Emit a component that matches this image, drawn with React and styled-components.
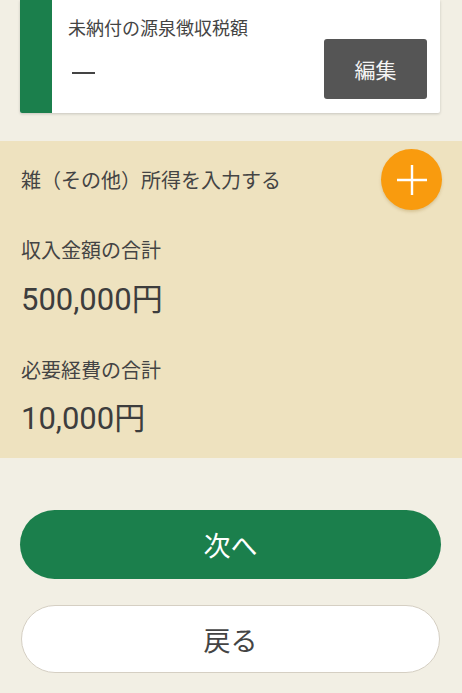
import React from "react";
import styled, { createGlobalStyle } from "styled-components";

const GlobalStyle = createGlobalStyle`
  body {
    margin: 0;
    background: #f2efe4;
    font-family: "Noto Sans CJK JP", "Noto Sans", sans-serif;
    color: #444;
  }
`;

const Page = styled.div`
  width: 462px;
  height: 693px;
  overflow: hidden;
  display: flex;
  flex-direction: column;
`;

const Card = styled.div`
  margin: 0 22px 0 20px;
  height: 113px;
  display: flex;
  background: #fff;
  border-radius: 0 0 2px 2px;
  box-shadow: 0 1px 3px rgba(0, 0, 0, 0.18);
`;

const Bar = styled.div`
  width: 32px;
  background: #1b7f4c;
  border-radius: 0 0 0 2px;
`;

const CardBody = styled.div`
  flex: 1;
  padding: 14px 13px 0 16px;
  display: flex;
  flex-direction: column;
`;

const Label = styled.div`
  font-size: ${(p) => p.size || 18}px;
  line-height: ${(p) => p.lh || 27}px;
  color: #444;
`;

const CardRow = styled.div`
  display: flex;
  justify-content: space-between;
  align-items: center;
  margin-top: -2px;
`;

const Dash = styled.div`
  width: 23px;
  height: 2.5px;
  background: #444;
  margin-left: 4px;
  margin-top: 8px;
`;

const EditButton = styled.button`
  width: 103px;
  height: 60px;
  border: none;
  border-radius: 3px;
  background: #555;
  color: #f4f4f4;
  font-family: inherit;
  font-size: 21px;
`;

const Section = styled.div`
  margin-top: 28px;
  background: #eee2bf;
  padding: 8px 21px 19px 21px;
`;

const SectionHead = styled.div`
  display: flex;
  justify-content: space-between;
  align-items: center;
  margin-right: -1px;
`;

const Title = styled.div`
  font-size: 20px;
  color: #444;
`;

const AddButton = styled.div`
  width: 61px;
  height: 61px;
  border-radius: 50%;
  background: #f99b0e;
  box-shadow: 0 2px 3px rgba(150, 110, 30, 0.25);
  display: flex;
  align-items: center;
  justify-content: center;
`;

const Item = styled.div`
  margin-top: ${(p) => p.gap}px;
`;

const Amount = styled.div`
  font-family: "Roboto", "Noto Sans CJK JP", sans-serif;
  font-size: 31px;
  line-height: 40px;
  color: #3d3d3d;
  margin-top: ${(p) => p.gap}px;
`;

const Buttons = styled.div`
  margin-top: 52px;
  padding: 0 21px 0 20px;
  display: flex;
  flex-direction: column;
  gap: 26px;
`;

const PillButton = styled.button`
  height: ${(p) => (p.primary ? 69 : 68)}px;
  border-radius: 35px;
  border: ${(p) => (p.primary ? "none" : "1px solid #d5cfc3")};
  background: ${(p) => (p.primary ? "#1b7f4c" : "#fff")};
  color: ${(p) => (p.primary ? "#fff" : "#444")};
  font-family: inherit;
  font-size: 27px;
  margin: ${(p) => (p.primary ? "0" : "0 1px")};
`;

export default function App() {
  return (
    <Page>
      <GlobalStyle />
      <Card>
        <Bar />
        <CardBody>
          <Label>未納付の源泉徴収税額</Label>
          <CardRow>
            <Dash />
            <EditButton>編集</EditButton>
          </CardRow>
        </CardBody>
      </Card>
      <Section>
        <SectionHead>
          <Title>雑（その他）所得を入力する</Title>
          <AddButton>
            <svg width="32" height="32" viewBox="0 0 32 32">
              <path d="M16 1v30M1 16h30" stroke="#fff" strokeWidth="2.4" />
            </svg>
          </AddButton>
        </SectionHead>
        <Item gap={25}>
          <Label size={20} lh={30}>収入金額の合計</Label>
          <Amount gap={15}>500,000円</Amount>
        </Item>
        <Item gap={35}>
          <Label size={20} lh={30}>必要経費の合計</Label>
          <Amount gap={14}>10,000円</Amount>
        </Item>
      </Section>
      <Buttons>
        <PillButton primary>次へ</PillButton>
        <PillButton>戻る</PillButton>
      </Buttons>
    </Page>
  );
}
